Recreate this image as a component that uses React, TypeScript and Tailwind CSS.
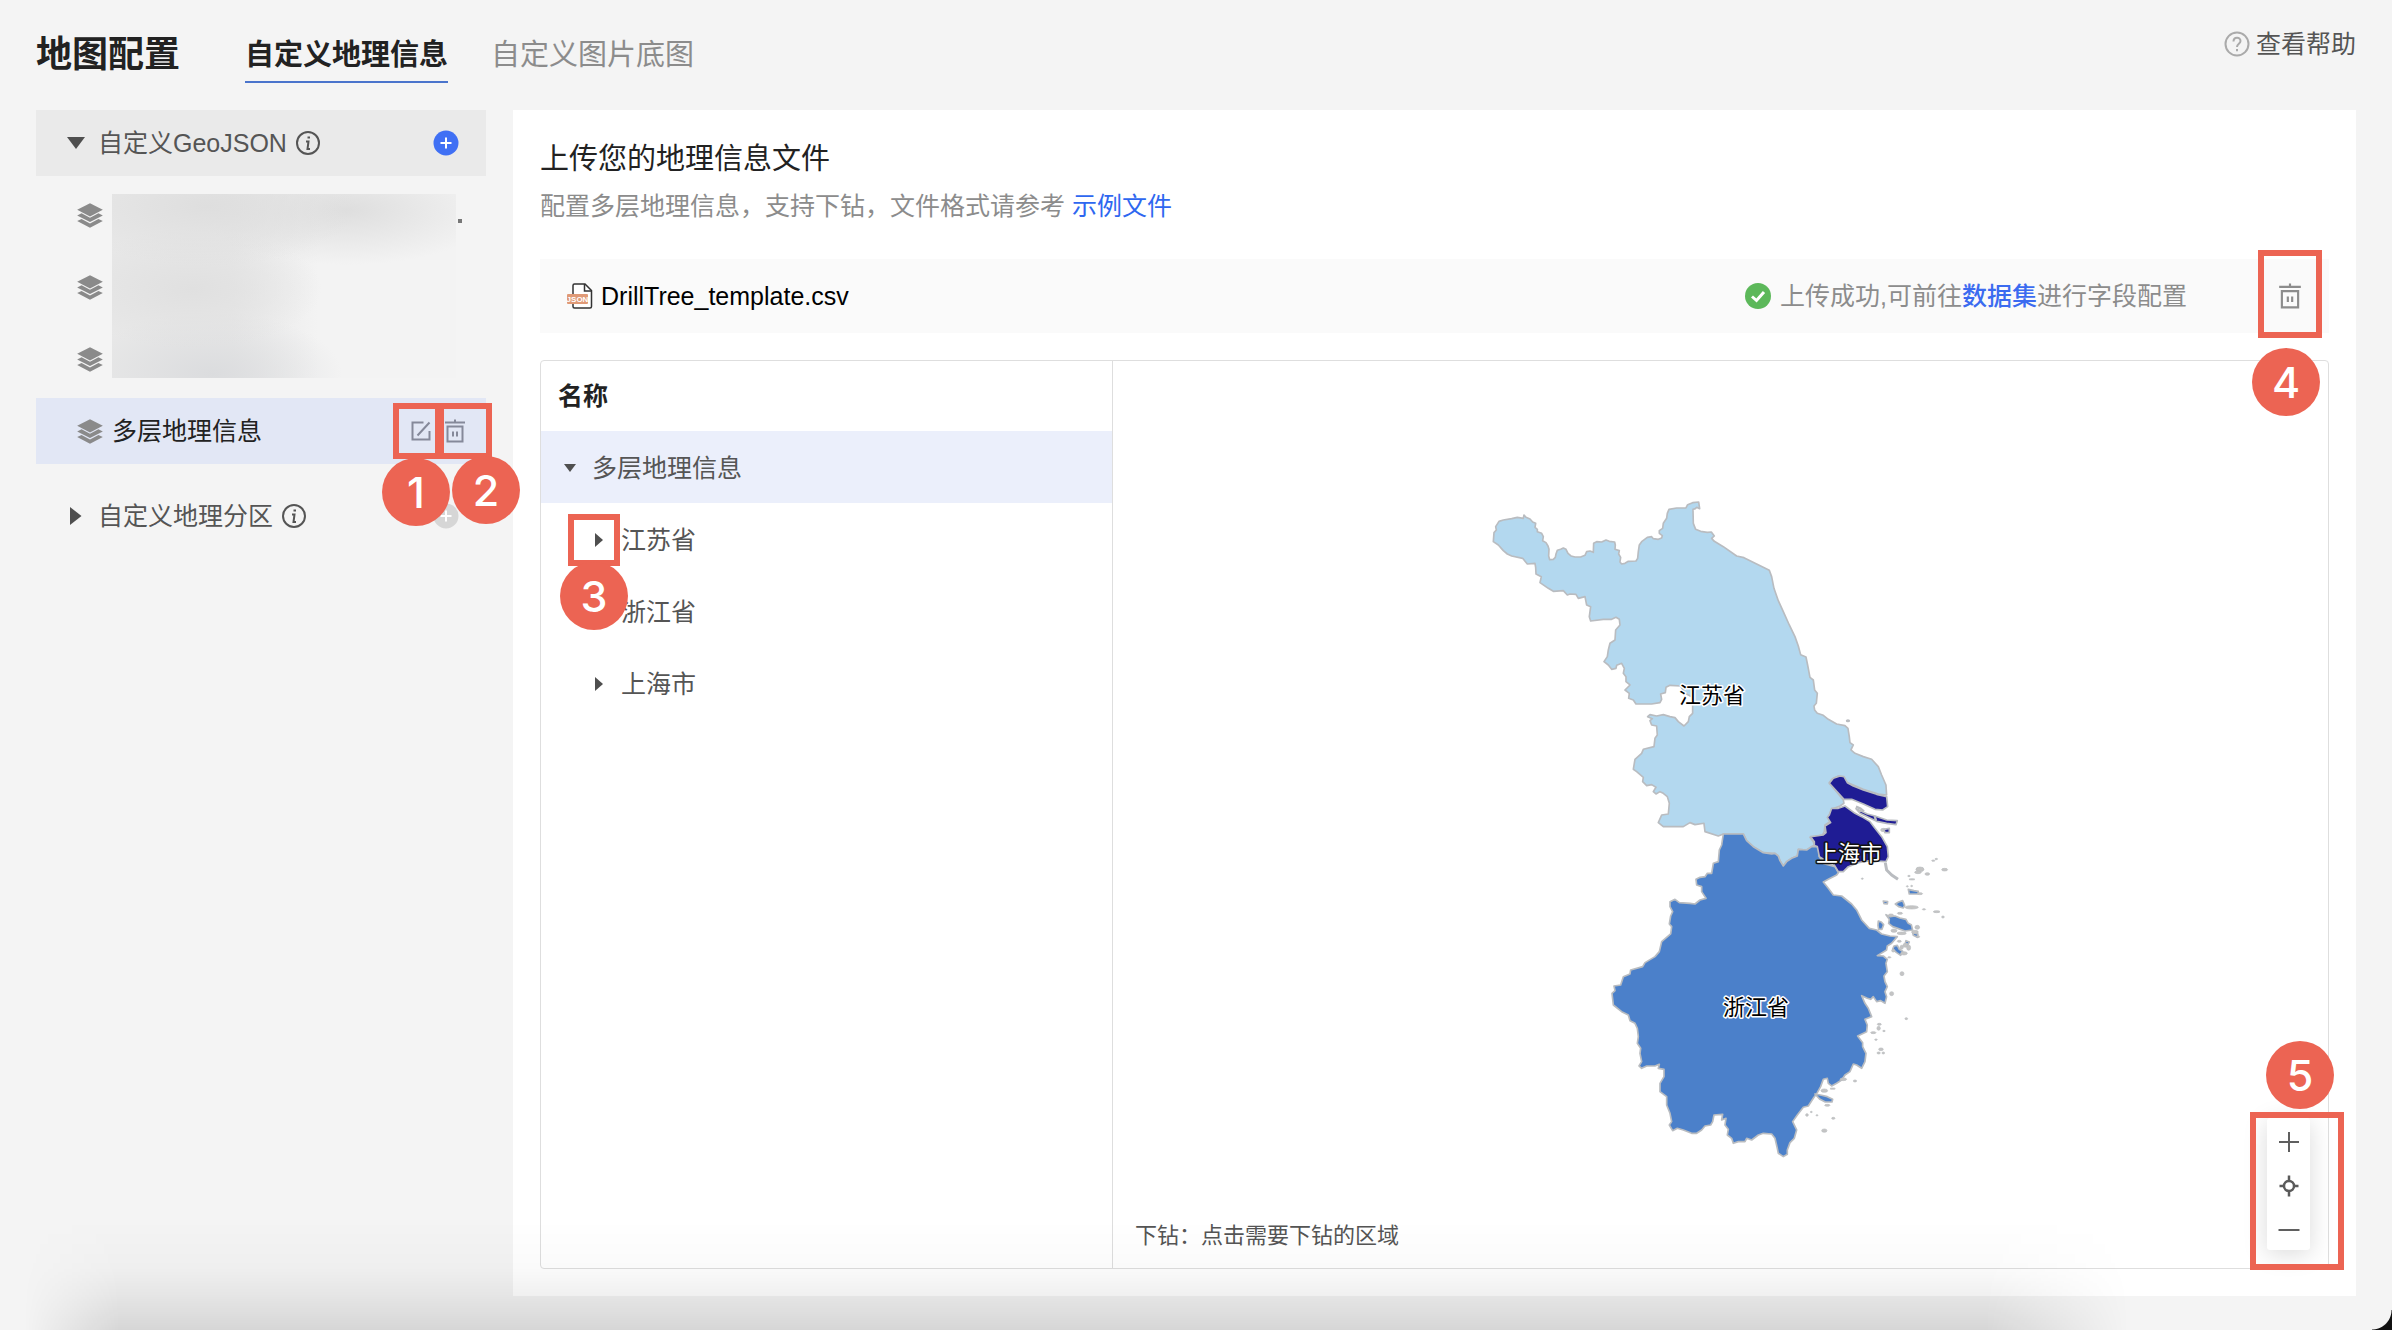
import { useState } from "react";
import clsx from "clsx";

const RED_BOX = "pointer-events-none absolute z-20 border-6 border-[#ec6453]";
const RED_DOT =
  "pointer-events-none absolute z-20 flex size-[68px] items-center justify-center rounded-full bg-[#ec6453] font-['Inter','Liberation_Sans',sans-serif] text-[43px] leading-none font-medium text-white";

const PROVINCES = ["江苏省", "浙江省", "上海市"];

export default function App() {
  return (
    <div className="relative flex min-h-screen flex-col overflow-hidden bg-[#f4f4f4] px-9 pb-[34px] font-['Liberation_Sans','Noto_Sans_CJK_SC',sans-serif] text-[25px] leading-9 text-[#555]">
      <Header />
      <div className="flex flex-1 gap-[27px]">
        <Sidebar />
        <main className="flex min-w-0 flex-1 flex-col bg-white px-[27px] pt-7 pb-[27px]">
          <h2 className="text-[29px] leading-[42px] text-[#222]">上传您的地理信息文件</h2>
          <p className="mt-2 text-[#8c8c8c]">
            配置多层地理信息，支持下钻，文件格式请参考{" "}
            <a href="#example" className="text-[#2e67f0]">示例文件</a>
          </p>
          <FileBar />
          <section className="mt-[27px] flex flex-1 rounded-[4px] border border-[#dedede]">
            <RegionTree />
            <MapPane />
          </section>
        </main>
      </div>
      <div className="pointer-events-none absolute inset-x-0 bottom-0 h-[110px] bg-[linear-gradient(to_top,rgba(0,0,0,0.12),rgba(0,0,0,0.06)_34px,rgba(0,0,0,0.02)_62px,transparent)] [mask-image:linear-gradient(to_right,transparent_1%,black_5%,black_83%,transparent_89%)]" />
      <div className="pointer-events-none absolute right-0 bottom-0 size-5 bg-[radial-gradient(circle_at_0_0,transparent_19px,#111_20px)]" />
    </div>
  );
}

function Header() {
  return (
    <header className="flex h-[110px] items-start pt-[26px]">
      <h1 className="text-[36px] leading-[58px] font-bold text-[#222]">地图配置</h1>
      <nav className="ml-[65px] flex gap-[43px] text-[29px]">
        <button className="h-[57px] border-b-2 border-[#4a74cc] pt-0.5 font-bold text-[#222]">自定义地理信息</button>
        <button className="h-[57px] border-b-2 border-transparent pt-0.5 text-[#8c8c8c]">自定义图片底图</button>
      </nav>
      <a href="#help" className="ml-auto flex items-center gap-1.5">
        <svg viewBox="0 0 26 26" className="size-[26px]" fill="none" stroke="#aaa" strokeWidth="2">
          <circle cx="13" cy="13" r="11.5" />
          <path d="M9.5 10.5c0-5 7-5 7-.6 0 2.6-3.5 3-3.5 6M13 18v2.2" />
        </svg>
        查看帮助
      </a>
    </header>
  );
}

function Sidebar() {
  const [open, setOpen] = useState(true);

  return (
    <aside className="w-[450px] shrink-0">
      <GroupTitle open={open} onToggle={() => setOpen(!open)} label="自定义GeoJSON" />
      {open && (
        <ul className="relative">
          <LayerRow />
          <LayerRow />
          <LayerRow />
          <li className="relative mt-1.5 flex h-[66px] items-center bg-[#e2e7f5] pr-[21px] pl-[41px] text-[#222]">
            <LayersIcon />
            <span className="ml-[9px]">多层地理信息</span>
            <button aria-label="编辑" className="ml-auto">
              <svg viewBox="0 0 20 20" className="size-5" fill="none" stroke="#85899a" strokeWidth="2">
                <path d="M12.5 1.5H1.5v17h17V10M6.500 14.500 18.500 1.500" />
              </svg>
            </button>
            <button aria-label="删除" className="ml-[14px]">
              <TrashIcon className="h-6 w-5 text-[#85899a]" />
            </button>
            <span className={clsx(RED_BOX, "top-[5px] right-[45px] h-14 w-12")} />
            <span className={clsx(RED_BOX, "top-[5px] -right-1.5 h-14 w-[54px]")} />
            <span className={clsx(RED_DOT, "top-[60px] right-9")}>1</span>
            <span className={clsx(RED_DOT, "top-[58px] -right-[34px]")}>2</span>
          </li>
          {/* names hidden behind a frosted block */}
          <li
            aria-hidden
            className="absolute top-3 left-[76px] h-[184px] w-[344px] bg-[#f3f3f3] bg-[radial-gradient(ellipse_150px_60px_at_95px_12px,#dedede,transparent),radial-gradient(ellipse_150px_55px_at_235px_16px,#dedede,transparent),radial-gradient(ellipse_130px_60px_at_80px_95px,#e0e0e0,transparent),radial-gradient(ellipse_130px_62px_at_100px_180px,#dbdcde,transparent),linear-gradient(to_right,#e8e8e8_35%,transparent_60%)]"
          />
        </ul>
      )}
      <div className="mt-[19px]">
        <GroupTitle open={false} label="自定义地理分区" />
      </div>
    </aside>
  );
}

function GroupTitle({ open, label, onToggle }: { open: boolean; label: string; onToggle?: () => void }) {
  return (
    <div className={clsx("flex h-[66px] items-center pr-[27px] pl-[31px]", open && "bg-[#eaeaea]")}>
      <button onClick={onToggle} className="flex items-center gap-[13px]">
        <svg viewBox="0 0 18 18" className="size-[18px]" fill="#4f4f4f">
          <path d={open ? "M0 3h18L9 15Z" : "M3 0 14.500 9 3 18Z"} />
        </svg>
        {label}
      </button>
      <svg viewBox="0 0 26 26" className="ml-2 size-[26px]" fill="none" stroke="#555" strokeWidth="2">
        <circle cx="13" cy="13" r="11" />
        <path d="M11 11.500h2.500l-1 7.500H15" />
        <path d="M12.500 6.500h2.500v2h-2.500z" fill="#555" stroke="none" />
      </svg>
      <button aria-label="新增" className="ml-auto">
        <svg viewBox="0 0 26 26" className="size-[26px]" strokeWidth="2" stroke="#fff">
          <circle cx="13" cy="13" r="12.500" fill={open ? "#4070f4" : "#d6d6d6"} stroke="none" />
          <path d="M13 7.500v11M7.500 13h11" />
        </svg>
      </button>
    </div>
  );
}

function LayerRow() {
  return (
    <li className="mt-1.5 flex h-[66px] items-center pr-5 pl-[41px] first:after:mt-3 first:after:mr-1 first:after:ml-auto first:after:size-1 first:after:bg-[#777]">
      <LayersIcon />
    </li>
  );
}

function FileBar() {
  return (
    <div className="mt-[35px] flex h-[74px] items-center bg-[#fafafa] pr-7 pl-[27px]">
      <svg viewBox="0 0 26 26" className="size-[26px]" fill="none">
        <path d="M6 2.500Q6 1 7.500 1H18l6.500 6.500V23.500Q24.500 25 23 25H7.500Q6 25 6 23.500Z" fill="#fff" stroke="#333" strokeWidth="1.500" />
        <path d="M17.500 1v7h7" stroke="#333" strokeWidth="1.500" />
        <rect x="0" y="11" width="21" height="10" rx="1" fill="#e09a77" />
        <text x="10.500" y="19" textAnchor="middle" fontSize="8" fontWeight="700" fill="#fff">JSON</text>
      </svg>
      <span className="ml-2 text-black">DrillTree_template.csv</span>
      <svg viewBox="0 0 26 26" className="ml-auto size-[26px]" fill="none">
        <circle cx="13" cy="13" r="13" fill="#5cb85a" />
        <path d="m7 13.500 4.500 4L19 9" stroke="#fff" strokeWidth="3" />
      </svg>
      <span className="ml-[9px] text-[#8c8c8c]">
        上传成功,可前往<a href="#dataset" className="font-medium text-[#3b6bf0]">数据集</a>进行字段配置
      </span>
      <div className="relative ml-[92px] h-[26px]">
        <button aria-label="删除文件" className="block">
          <TrashIcon className="h-[26px] w-[22px] text-[#8c8c8c]" />
        </button>
        <span className={clsx(RED_BOX, "-top-[33px] -left-[21px] h-[88px] w-16")} />
        <span className={clsx(RED_DOT, "top-[65px] -left-[27px]")}>4</span>
      </div>
    </div>
  );
}

function RegionTree() {
  return (
    <div className="w-[572px] shrink-0 border-r border-[#dedede]">
      <div className="pl-[17px] leading-[70px] font-bold text-[#222]">名称</div>
      <div className="flex h-[72px] items-center gap-[15px] bg-[#ebeffb] pt-0.5 pl-[22px]">
        <button aria-label="收起" className="h-[14px]">
          <Caret open />
        </button>
        多层地理信息
      </div>
      <ul>
        {PROVINCES.map((name, i) => (
          <li key={name} className="flex h-[72px] items-center gap-[15px] pt-0.5 pl-[51px]">
            <div className="relative h-[14px]">
              <button aria-label={`展开${name}`} className="block">
                <Caret />
              </button>
              {i === 0 && (
                <>
                  <span className={clsx(RED_BOX, "-top-[19px] -left-6 size-[52px]")} />
                  <span className={clsx(RED_DOT, "top-[29px] -left-8")}>3</span>
                </>
              )}
            </div>
            {name}
          </li>
        ))}
      </ul>
    </div>
  );
}

function MapPane() {
  return (
    <div className="relative min-w-0 flex-1">
      <RegionMap />
      <p className="absolute bottom-[14px] left-[22px] text-[22px]">下钻：点击需要下钻的区域</p>
      <div className="absolute right-[18px] bottom-[18px] h-[132px] w-[43px]">
        <div className="flex h-full flex-col items-center justify-between rounded-[3px] bg-white pt-[9px] pb-[5px] shadow-[0_4px_24px_rgba(0,0,0,0.15)]">
          <button aria-label="放大">
            <svg viewBox="0 0 30 30" className="size-[30px]" stroke="#5f5f5f" strokeWidth="2">
              <path d="M15 5v20M5 15h20" />
            </svg>
          </button>
          <button aria-label="定位">
            <svg viewBox="0 0 30 30" className="size-[30px]" fill="none" stroke="#5a5a5a" strokeWidth="2.500">
              <circle cx="15" cy="15" r="5" />
              <path d="M15 4.500v5M15 20.500v5M5.500 15h4.500M20 15h4.500" />
            </svg>
          </button>
          <button aria-label="缩小">
            <svg viewBox="0 0 30 30" className="size-[30px]" stroke="#5f5f5f" strokeWidth="2">
              <path d="M4.500 15h21" />
            </svg>
          </button>
        </div>
        <span className={clsx(RED_BOX, "-top-1.5 -left-[17px] h-[158px] w-[94px]")} />
        <span className={clsx(RED_DOT, "-top-[77px] -left-px")}>5</span>
      </div>
    </div>
  );
}

function Caret({ open }: { open?: boolean }) {
  return (
    <svg viewBox="0 0 14 14" className="size-[14px]" fill="#4f4f4f">
      <path d={open ? "M1 3h12L7 11Z" : "M3 0 11 7 3 14Z"} />
    </svg>
  );
}

function LayersIcon() {
  return (
    <svg viewBox="0 0 76 74" className="h-[25px] w-[26px] shrink-0" fill="#8a8a8a">
      <path d="M38 1 76 20 38 40 0 20Z" />
      <path d="M0 37 13 30 38 44 63 30 76 37 38 56Z" />
      <path d="M0 53 13 47 38 61 63 47 76 53 38 73Z" />
    </svg>
  );
}

function TrashIcon({ className }: { className: string }) {
  return (
    <svg viewBox="0 0 20 24" className={className} fill="none" stroke="currentColor" strokeWidth="2">
      <path d="M0 3.500h20M10 .5v3M2.500 7.500h15v15h-15zM8 12.500v5M12 12.500v5" />
    </svg>
  );
}

const JIANGSU =
  "M70 185 72 158 79 150 77 140 87 124 100 120 125 116 142 112 160 115 162 105 168 112 180 117 188 126 197 130 195 142 202 148 202 155 215 160 220 170 218 182 228 188 234 198 237 208 236 228 239 239 250 238 256 232 258 222 262 211 272 208 280 204 288 208 294 220 303 228 315 231 332 231 345 226 350 215 360 213 370 217 371 190 380 185 395 186 408 180 418 184 434 186 436 195 435 208 448 212 446 222 452 232 450 246 455 252 465 250 475 244 498 243 503 235 505 215 508 195 515 185 528 175 532 172 545 170 550 176 565 178 575 174 577 167 568 160 568 152 578 145 580 130 590 115 592 100 597 88 620 84 648 84 653 74 668 68 686 66 689 86 680 82 676 86 669 88 670 130 677 148 692 154 712 157 724 156 733 168 725 175 733 184 760 200 800 228 822 233 860 252 898 271 905 290 912 325 925 362 940 395 958 435 975 470 985 498 992 524 1008 531 1013 555 1020 592 1030 600 1034 630 1042 640 1039 670 1032 678 1034 690 1042 700 1060 706 1075 718 1100 732 1125 737 1134 745 1138 770 1140 788 1150 795 1143 810 1155 820 1180 830 1205 838 1225 860 1235 885 1248 915 1250 945 1225 942 1180 928 1150 915 1132 908 1122 895 1105 888 1088 896 1078 908 1120 960 1122 970 1110 978 1085 988 1078 1005 1073 1012 1080 1025 1065 1035 1063 1055 1058 1065 1035 1070 1020 1072 1030 1085 1033 1095 1010 1110 985 1108 982 1128 965 1135 950 1145 940 1158 930 1142 925 1128 915 1120 880 1118 850 1100 830 1082 820 1062 760 1062 745 1068 705 1055 702 1030 675 1034 660 1028 640 1040 580 1040 565 1028 575 1005 595 1002 598 970 592 950 580 940 570 935 558 942 550 935 558 922 545 914 530 917 518 905 520 892 500 875 490 868 495 838 515 820 520 808 552 800 555 775 562 765 560 738 545 735 540 722 547 716 533 710 540 704 560 708 580 704 600 710 615 713 625 725 642 738 655 725 658 710 668 700 668 652 645 640 632 618 600 616 588 622 586 638 572 642 575 658 570 668 545 672 498 672 490 660 476 655 478 640 465 630 480 615 468 605 468 590 460 580 463 565 455 550 440 556 438 565 425 568 415 555 402 545 412 530 415 510 420 490 435 480 437 450 450 435 448 418 438 412 425 418 400 418 362 423 358 410 362 380 350 375 345 350 325 355 318 343 300 342 292 345 280 332 250 334 235 325 210 308 214 290 198 282 197 262 195 250 172 252 158 235 125 228 112 222 100 212 85 195Z";

const ZHEJIANG =
  "M400 42 460 42 470 62 490 80 520 98 545 102 555 100 565 108 570 122 580 138 590 125 605 115 622 108 625 88 650 90 665 80 685 80 688 110 700 130 735 140 745 158 740 165 715 178 700 186 715 205 730 225 755 228 785 252 800 270 815 300 838 325 860 330 875 342 900 348 922 350 905 370 892 378 890 390 862 407 880 408 892 418 888 430 892 455 882 468 885 485 892 500 885 515 890 530 885 550 872 542 860 545 850 530 842 538 832 535 815 527 825 550 835 565 845 590 825 598 832 615 830 635 803 648 818 668 818 680 828 700 825 725 815 745 800 735 790 732 780 755 765 765 755 780 740 790 725 798 715 790 712 775 700 778 692 800 682 818 670 835 655 858 640 862 622 885 608 905 620 930 613 955 600 968 592 990 592 1003 580 1010 565 1000 562 985 555 955 545 942 520 940 505 945 485 960 470 955 465 965 445 965 430 970 425 955 412 945 415 928 405 915 408 895 395 900 398 883 372 885 368 905 362 915 345 918 335 930 320 940 305 940 280 930 262 925 248 932 238 915 245 905 240 880 230 855 230 830 210 815 210 790 222 770 222 748 205 745 208 733 195 738 170 738 155 745 147 738 155 725 150 700 152 685 142 670 145 650 142 625 135 610 120 602 115 585 95 575 70 555 66 520 75 512 72 498 92 495 100 470 120 462 122 450 158 440 165 428 195 410 208 395 215 365 242 342 245 320 238 312 242 288 248 275 240 260 240 245 255 238 268 248 300 250 315 252 330 240 348 235 335 215 335 200 320 195 318 178 330 172 345 170 352 160 365 160 370 130 385 125 388 90 395 75Z";

const ZHEJIANG_ISLANDS = [
  "M955 208 972 212 985 214 984 222 958 222Z",
  "M880 243 893 245 892 252 882 251Z",
  "M916 252 926 246 938 242 944 256 940 264 926 260Z",
  "M888 284 900 290 915 288 930 294 948 298 955 310 964 314 968 330 945 333 925 326 908 320 896 310 898 298Z",
  "M865 303 874 306 881 314 876 328 866 328 864 316Z",
  "M968 338 984 342 982 352 970 346Z",
  "M912 378 922 376 928 388 938 394 932 406 920 398 908 388Z",
  "M948 362 958 366 954 374 946 370Z",
  "M675 822 695 826 712 830 728 838 726 846 706 846 690 838Z",
];

const SHANGHAI =
  "M195 318 175 325 155 325 148 345 142 352 152 368 135 378 138 398 130 405 92 410 103 425 103 437 112 440 118 470 130 478 160 490 175 515 190 515 205 500 235 488 270 482 318 485 325 470 322 440 305 410 285 385 270 365 245 350 225 340ZM148 250 160 235 180 228 192 230 202 248 220 258 250 270 290 283 320 290 323 320 308 330 285 328 250 312 215 298 192 298ZM228 326 262 342 285 348 320 360 352 362 348 374 320 370 290 364 265 352 240 340ZM312 388 328 385 328 398 315 398Z";

// [x, y, rx, ry] of the offshore islets too small to fill
const ISLETS = [
  [1030, 122, 5, 2], [1039, 117, 4, 2], [1064, 149, 9, 4], [990, 148, 12, 7], [984, 157, 10, 4], [1012, 162, 7, 4],
  [957, 168, 4, 2], [966, 178, 9, 2], [817, 176, 3, 2], [965, 198, 3, 2], [952, 199, 3, 2], [990, 221, 8, 3],
  [965, 262, 20, 5], [1002, 268, 5, 2], [1040, 275, 10, 3], [1059, 291, 4, 3], [982, 322, 7, 6], [975, 336, 10, 5],
  [912, 332, 9, 5], [935, 340, 14, 4], [984, 350, 5, 3], [928, 364, 6, 3], [946, 376, 7, 6], [956, 383, 6, 8],
  [935, 382, 5, 6], [942, 400, 10, 5], [910, 392, 5, 4], [903, 286, 8, 4], [930, 280, 8, 3], [898, 412, 5, 2],
  [936, 461, 6, 6], [905, 521, 6, 6], [949, 596, 4, 3], [868, 613, 6, 3], [866, 625, 5, 6], [882, 633, 4, 2],
  [850, 638, 8, 3], [858, 659, 4, 2], [873, 688, 7, 4], [866, 699, 5, 3], [880, 699, 4, 3], [795, 783, 5, 3],
  [760, 778, 10, 4], [728, 806, 8, 2], [703, 812, 10, 5], [712, 856, 8, 3], [664, 876, 3, 2], [651, 885, 4, 4],
  [681, 886, 3, 2], [730, 895, 5, 3], [703, 932, 8, 5], [880, 30, 8, 5],
];

function RegionMap() {
  return (
    <svg viewBox="1113 361 1215 907" className="absolute inset-0 size-full" strokeLinejoin="round" stroke="#b9bcc0" strokeWidth="5">
      <g transform="translate(1470 480) scale(.3333)">
        <path d={JIANGSU} fill="#b3d8ef" />
        <ellipse cx="1134" cy="722" rx="4" ry="2" />
      </g>
      <g transform="translate(1590 820) scale(.3333)">
        <path d={ZHEJIANG} fill="#4b80ca" />
        {ZHEJIANG_ISLANDS.map((d) => (
          <path key={d} d={d} fill="#4b80ca" />
        ))}
        <path d="M886 128 890 150 905 165 924 178" fill="none" strokeWidth="9" />
        {ISLETS.map(([x, y, rx, ry]) => (
          <ellipse key={`${x}-${y}`} cx={x} cy={y} rx={rx} ry={ry} fill="#c4c4c4" strokeWidth="2" />
        ))}
      </g>
      <g transform="translate(1780 700) scale(.3333)">
        <path d={SHANGHAI} fill="#1f1c94" />
        <path d="M228 320 242 326 252 334M284 348 288 362" fill="none" strokeWidth="7" />
      </g>
      <g fontSize="22" textAnchor="middle" stroke="#fff" strokeWidth="3" paintOrder="stroke" fill="#000">
        <text x="1712" y="703">江苏省</text>
        <text x="1756" y="1015">浙江省</text>
        <text x="1849" y="861" fill="#fff" stroke="#111">上海市</text>
      </g>
    </svg>
  );
}
